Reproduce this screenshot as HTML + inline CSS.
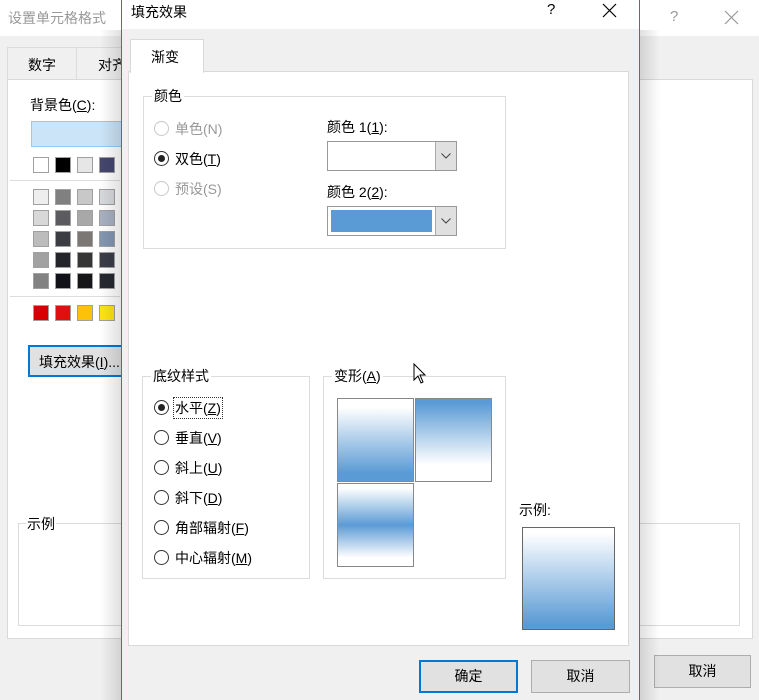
<!DOCTYPE html>
<html><head><meta charset="utf-8"><style>
*{box-sizing:border-box;margin:0;padding:0}
body{width:759px;height:700px;overflow:hidden;position:relative;background:#f0f0f0;font-family:"Liberation Sans","Noto Sans CJK SC",sans-serif;font-size:14px;color:#000}
.a{position:absolute}
.sw{position:absolute;width:16px;height:16px;border:1px solid #a0a0a0}
.gb{position:absolute;border:1px solid #dcdcdc}
.gl{position:absolute;background:#fff;padding:0 2px;top:-10px;left:8px;line-height:18px}
.rad{position:absolute;width:15px;height:15px;border:1px solid #333;border-radius:50%;background:#fff}
.rad.on::after{content:"";position:absolute;left:3px;top:3px;width:7px;height:7px;border-radius:50%;background:#222}
.rad.dis{border-color:#c8c8c8}
.btn{position:absolute;background:#e1e1e1;border:1px solid #adadad;text-align:center;line-height:30px}
</style></head><body>
<div class="a" style="left:0;top:0;width:759px;height:36px;background:#fff"></div>
<div class="a" style="left:8px;top:8px;color:#999;font-size:14px">设置单元格格式</div>
<div class="a" style="left:670px;top:8px;color:#999;font-size:15px">?</div>
<svg class="a" style="left:724px;top:10px" width="15" height="15"><path d="M1 1L14 14M14 1L1 14" stroke="#999" stroke-width="1.2"/></svg>
<div class="a" style="left:7px;top:47px;width:70px;height:33px;border:1px solid #dcdcdc;border-bottom:none;background:#f0f0f0"></div>
<div class="a" style="left:28px;top:55px">数字</div>
<div class="a" style="left:77px;top:47px;width:60px;height:33px;border-top:1px solid #dcdcdc"></div>
<div class="a" style="left:98px;top:55px">对齐</div>
<div class="a" style="left:7px;top:79px;width:746px;height:560px;background:#fff;border:1px solid #d9d9d9"></div>
<div class="a" style="left:30px;top:95px">背景色(<u>C</u>):</div>
<div class="a" style="left:31px;top:121px;width:100px;height:26px;background:#cce4f7;border:1px solid #99c9ef"></div>
<div class="a" style="left:10px;top:180px;width:110px;height:1px;background:#ddd"></div>
<div class="a" style="left:10px;top:296px;width:110px;height:1px;background:#ddd"></div>
<div class="sw" style="left:33px;top:157px;background:#fff"></div><div class="sw" style="left:55px;top:157px;background:#000"></div><div class="sw" style="left:77px;top:157px;background:#e6e6e6"></div><div class="sw" style="left:99px;top:157px;background:#44466e"></div>
<div class="sw" style="left:33px;top:189px;background:#eee"></div><div class="sw" style="left:55px;top:189px;background:#808080"></div><div class="sw" style="left:77px;top:189px;background:#c8c8c8"></div><div class="sw" style="left:99px;top:189px;background:#d6d8dc"></div>
<div class="sw" style="left:33px;top:210px;background:#d8d8d8"></div><div class="sw" style="left:55px;top:210px;background:#5b5b60"></div><div class="sw" style="left:77px;top:210px;background:#a8a8a8"></div><div class="sw" style="left:99px;top:210px;background:#a6b0c0"></div>
<div class="sw" style="left:33px;top:231px;background:#bcbcbc"></div><div class="sw" style="left:55px;top:231px;background:#3c3d42"></div><div class="sw" style="left:77px;top:231px;background:#7b7775"></div><div class="sw" style="left:99px;top:231px;background:#8296b0"></div>
<div class="sw" style="left:33px;top:252px;background:#a2a2a2"></div><div class="sw" style="left:55px;top:252px;background:#25262b"></div><div class="sw" style="left:77px;top:252px;background:#363636"></div><div class="sw" style="left:99px;top:252px;background:#3a3c48"></div>
<div class="sw" style="left:33px;top:273px;background:#828282"></div><div class="sw" style="left:55px;top:273px;background:#121318"></div><div class="sw" style="left:77px;top:273px;background:#161618"></div><div class="sw" style="left:99px;top:273px;background:#262a30"></div>
<div class="sw" style="left:33px;top:305px;background:#d80000"></div><div class="sw" style="left:55px;top:305px;background:#e01010"></div><div class="sw" style="left:77px;top:305px;background:#fcc20a"></div><div class="sw" style="left:99px;top:305px;background:#fde314"></div>
<div class="a" style="left:28px;top:345px;width:100px;height:32px;background:#e1e1e1;border:2px solid #0078d7"></div>
<div class="a" style="left:39px;top:352px">填充效果(<u>I</u>)...</div>
<div class="gb" style="left:18px;top:523px;width:722px;height:103px;background:#fff"></div>
<div class="a" style="left:26px;top:514px;background:#fff;padding:0 1px">示例</div>
<div class="btn" style="left:654px;top:655px;width:97px;height:33px">取消</div>
<div class="a" style="left:100px;top:30px;width:21px;height:670px;background:linear-gradient(to right,rgba(0,0,0,0),rgba(0,0,0,0.12))"></div>
<div class="a" style="left:640px;top:30px;width:20px;height:670px;background:linear-gradient(to right,rgba(0,0,0,0.12),rgba(0,0,0,0))"></div>
<div class="a" style="left:121px;top:0;width:519px;height:700px;background:#f0f0f0;border-left:1px solid #2b79c2;border-right:1px solid #2b79c2"></div>
<div class="a" style="left:122px;top:0;width:517px;height:29px;background:#fff"></div>
<div class="a" style="left:131px;top:2px">填充效果</div>
<div class="a" style="left:547px;top:1px;font-size:15px">?</div>
<svg class="a" style="left:602px;top:3px" width="15" height="15"><path d="M1 1L14 14M14 1L1 14" stroke="#000" stroke-width="1.2"/></svg>
<div class="a" style="left:128px;top:71px;width:501px;height:575px;background:#fff;border:1px solid #d9d9d9"></div>
<div class="a" style="left:130px;top:39px;width:74px;height:34px;background:#fff;border:1px solid #d9d9d9;border-bottom:none"></div>
<div class="a" style="left:151px;top:47px">渐变</div>
<div class="gb" style="left:143px;top:96px;width:363px;height:153px"><div class="gl">颜色</div></div>
<div class="rad dis" style="left:154px;top:121px"></div><div class="a" style="left:175px;top:119px;color:#999">单色(N)</div>
<div class="rad on" style="left:154px;top:151px"></div><div class="a" style="left:175px;top:149px">双色(<u>T</u>)</div>
<div class="rad dis" style="left:154px;top:181px"></div><div class="a" style="left:175px;top:179px;color:#999">预设(S)</div>
<div class="a" style="left:327px;top:117px">颜色 1(<u>1</u>):</div>
<div class="a" style="left:327px;top:141px;width:130px;height:30px;background:#fff;border:1px solid #999"></div>
<div class="a" style="left:435px;top:142px;width:21px;height:28px;background:#e0e0e0;border-left:1px solid #aaa"></div>
<svg class="a" style="left:441px;top:153px" width="10" height="6"><path d="M0.5 0.5L5 5L9.5 0.5" fill="none" stroke="#444"/></svg>
<div class="a" style="left:327px;top:182px">颜色 2(<u>2</u>):</div>
<div class="a" style="left:327px;top:206px;width:130px;height:30px;background:#fff;border:1px solid #999"></div>
<div class="a" style="left:331px;top:210px;width:101px;height:22px;background:#5b9bd5"></div>
<div class="a" style="left:435px;top:207px;width:21px;height:28px;background:#e0e0e0;border-left:1px solid #aaa"></div>
<svg class="a" style="left:441px;top:218px" width="10" height="6"><path d="M0.5 0.5L5 5L9.5 0.5" fill="none" stroke="#444"/></svg>
<div class="gb" style="left:142px;top:376px;width:168px;height:203px"><div class="gl">底纹样式</div></div>
<div class="rad on" style="left:154px;top:400px"></div><div class="a" style="left:173px;top:397px;border:1px dotted #333;padding:0 1px">水平(<u>Z</u>)</div>
<div class="rad" style="left:154px;top:430px"></div><div class="a" style="left:175px;top:428px">垂直(<u>V</u>)</div>
<div class="rad" style="left:154px;top:460px"></div><div class="a" style="left:175px;top:458px">斜上(<u>U</u>)</div>
<div class="rad" style="left:154px;top:490px"></div><div class="a" style="left:175px;top:488px">斜下(<u>D</u>)</div>
<div class="rad" style="left:154px;top:520px"></div><div class="a" style="left:175px;top:518px">角部辐射(<u>F</u>)</div>
<div class="rad" style="left:154px;top:550px"></div><div class="a" style="left:175px;top:548px">中心辐射(<u>M</u>)</div>
<div class="gb" style="left:323px;top:376px;width:183px;height:203px"><div class="gl">变形(<u>A</u>)</div></div>
<div class="a" style="left:337px;top:398px;width:77px;height:84px;border:1px solid #888;background:linear-gradient(#fff 10%,#5b9bd5 90%)"></div>
<div class="a" style="left:415px;top:398px;width:77px;height:84px;border:1px solid #888;background:linear-gradient(#5b9bd5 5%,#fff 80%)"></div>
<div class="a" style="left:337px;top:483px;width:77px;height:84px;border:1px solid #888;background:linear-gradient(#fff 5%,#5b9bd5 50%,#fff 90%)"></div>
<div class="a" style="left:519px;top:500px">示例:</div>
<div class="a" style="left:522px;top:527px;width:93px;height:103px;border:1px solid #666;background:linear-gradient(#fff 5%,#5b9bd5 95%)"></div>
<div class="btn" style="left:419px;top:660px;width:99px;height:33px;border:2px solid #0078d7;line-height:29px">确定</div>
<div class="btn" style="left:531px;top:660px;width:99px;height:33px">取消</div>
<svg class="a" style="left:413px;top:363px" width="14" height="22"><path d="M1 1 L1 17 L5 13 L8 20 L10 19 L7 12 L12 12 Z" fill="#fff" stroke="#000" stroke-width="1"/></svg>
</body></html>
